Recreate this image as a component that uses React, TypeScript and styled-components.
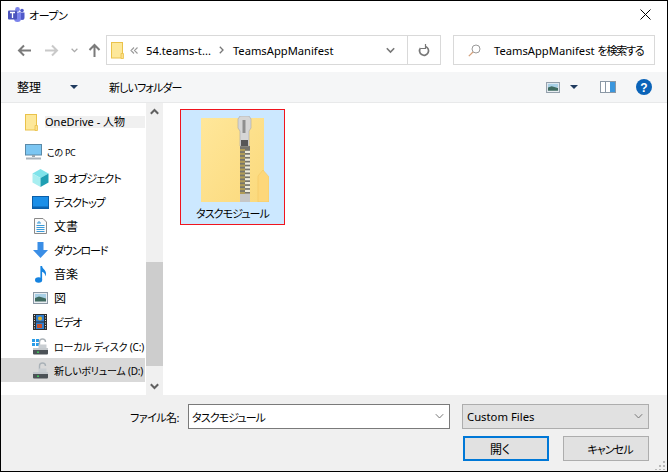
import React from "react";
import styled, { createGlobalStyle } from "styled-components";

const Global = createGlobalStyle`
  html, body { margin: 0; padding: 0; background: #000; }
  * { box-sizing: border-box; }
`;
const font = `"Noto Sans", "Noto Sans CJK JP", sans-serif`;

const Win = styled.div`
  width: 668px; height: 472px; background: #fff; border: 1px solid #000;
  display: flex; flex-direction: column;
  font-family: ${font}; font-size: 12px; color: #000; overflow: hidden; position: relative;
  font-feature-settings: "palt";
`;
const Kana = styled.span`font-size: 11px; letter-spacing: -0.9px; white-space: nowrap;`;
const TitleBar = styled.div`
  height: 27px; margin-bottom: 2px; display: flex; align-items: center; padding: 0 0 0 7px; gap: 4px; flex: none;
`;
const Title = styled.span`flex: 1; font-size: 11px; letter-spacing: -0.4px;`;
const CloseBtn = styled.div`width: 46px; height: 29px; display: flex; align-items: center; justify-content: center; margin-right: -1px;`;
const NavRow = styled.div`
  height: 30px; margin-top: 5px; display: flex; align-items: stretch; flex: none; padding-left: 11px;
`;
const NavBtns = styled.div`width: 94px; display: flex; align-items: center; flex: none;`;
const NavSlot = styled.div<{ $w: number }>`width: ${p => p.$w}px; display: flex; justify-content: center; align-items: center; flex: none;`;
const Address = styled.div`
  width: 335px; border: 1px solid #d9d9d9; display: flex; align-items: center; padding-left: 4px; flex: none;
`;
const Crumb = styled.span`font-size: 11.2px; white-space: nowrap;`;
const Sep = styled.span<{ $l: number; $r: number }>`display: flex; align-items: center; margin: 0 ${p => p.$r}px 0 ${p => p.$l}px;`;
const AddrSpacer = styled.div`flex: 1;`;
const AddrDrop = styled.div`width: 33px; display: flex; justify-content: center; flex: none;`;
const AddrRefresh = styled.div`width: 33px; height: 100%; border-left: 1px solid #d9d9d9; display: flex; align-items: center; justify-content: center; flex: none;`;
const Search = styled.div`
  width: 202px; margin-left: 12px; border: 1px solid #d9d9d9; display: flex; align-items: center; padding-left: 14px; gap: 13px; flex: none;
`;
const SearchIcon = styled.svg`flex: none;`;
const SearchText = styled.span`font-size: 11.2px; white-space: nowrap;`;
const SearchKana = styled.span`font-size: 11px; letter-spacing: -1.2px;`;
const Toolbar = styled.div`
  height: 31px; margin-top: 7px; background: #f5f6f7; border-bottom: 1px solid #e8e9ea; display: flex; align-items: center;
  flex: none; position: relative; padding-left: 16px;
`;
const ToolLabel = styled.span`font-size: 12px; white-space: nowrap;`;
const NewFolder = styled(Kana)`margin-left: 31px;`;
const ToolSpacer = styled.div`flex: 1;`;
const Caret = styled.span<{ $ml: number }>`
  width: 0; height: 0; border-left: 4px solid transparent; border-right: 4px solid transparent; border-top: 4px solid #1f3a5f;
  margin-left: ${p => p.$ml}px; flex: none;
`;
const PaneIcon = styled.svg`margin-left: 22px; flex: none;`;
const HelpIcon = styled.svg`margin-left: 20px; margin-right: 15px; flex: none;`;
const Main = styled.div`flex: 1; display: flex; min-height: 0;`;
const Sidebar = styled.div`width: 144px; flex: none; padding-top: 8px; display: flex; flex-direction: column;`;
const NavItem = styled.div<{ $sel?: boolean; $pl: number; $h?: number; $fs?: number; $mt?: number; $ls?: number }>`
  height: ${p => p.$h ?? 24}px; display: flex; align-items: center; padding-left: ${p => p.$pl}px; gap: 4px;
  margin-top: ${p => p.$mt ?? 0}px; letter-spacing: ${p => p.$ls ?? 0}px;
  background: ${p => (p.$sel ? "#d9d9d9" : "transparent")}; font-size: ${p => p.$fs ?? 12}px; white-space: nowrap; flex: none;
`;
const OneDriveRow = styled.div`height: 22px; display: flex; align-items: center; padding-left: 24px; gap: 7px; margin-bottom: 8px; flex: none;`;
const OneDriveLabel = styled.span`flex: 1; background: #f0f0f0; height: 12px; line-height: 12px; font-size: 11px; white-space: nowrap;`;
const IconBox = styled.span`width: 20px; display: flex; justify-content: center; align-items: center; flex: none;`;
const Scrollbar = styled.div`width: 17px; margin-left: 1px; background: #f0f0f0; flex: none; display: flex; flex-direction: column;`;
const ScrollBtn = styled.div`height: 17px; display: flex; align-items: center; justify-content: center; flex: none;`;
const ScrollSpace = styled.div`height: 142px; flex: none;`;
const Thumb = styled.div`height: 104px; background: #cdcdcd; flex: none;`;
const ScrollRest = styled.div`flex: 1;`;
const Content = styled.div`flex: 1; padding: 6px 0 0 17px;`;
const TileFrame = styled.div`width: 105px; height: 116px; background: #f0141e; padding: 1px;`;
const Tile = styled.div`
  width: 100%; height: 100%; background: #cce8ff; display: flex; flex-direction: column; align-items: center;
`;
const TileIcon = styled.div`height: 93px; padding-top: 6px; padding-left: 4px; flex: none;`;
const TileLabel = styled(Kana)`line-height: 16px; margin-top: 3px;`;
const Bottom = styled.div`height: 76px; background: #f0f0f0; flex: none; position: relative; padding: 9px 18px 0 129px; display: flex; flex-direction: column; gap: 7px;`;
const FieldRow = styled.div`display: flex; align-items: center; height: 25px;`;
const FieldLabel = styled(Kana)`width: 58px; flex: none; letter-spacing: -0.5px;`;
const Input = styled.div`
  width: 262px; height: 25px; background: #fff; border: 1px solid #7a7a7a; display: flex; align-items: center; padding-left: 3px; justify-content: space-between; padding-right: 5px; flex: none;
`;
const Combo = styled.div`
  width: 187px; height: 25px; margin-left: 12px; background: #e1e1e1; border: 1px solid #adadad; display: flex; align-items: center; justify-content: space-between; padding: 0 5px 0 4px; font-size: 11.3px; flex: none;
`;
const BtnRow = styled.div`display: flex; justify-content: flex-end; gap: 14px;`;
const Btn = styled.div<{ $primary?: boolean; $shift: number }>`
  width: 86px; height: 25px; background: #e1e1e1; border: ${p => (p.$primary ? "2px solid #0078d7" : "1px solid #adadad")};
  display: flex; align-items: center; justify-content: center; font-size: 12px; flex: none;
  padding-left: ${p => Math.max(p.$shift, 0)}px; padding-right: ${p => Math.max(-p.$shift, 0)}px;
`;
const Grip = styled.svg`position: absolute; right: 1px; bottom: 1px;`;

const Arrow = ({ dir, c }: { dir: "l" | "r" | "u"; c: string }) => {
  const d = dir === "l" ? "M2 7.5H14M7 2.5L2 7.5L7 12.5" : dir === "r" ? "M1 7.5H13M8 2.5L13 7.5L8 12.5" : "M7.5 14V2M2.5 7L7.5 2L12.5 7";
  return <svg width="15" height="15" fill="none" stroke={c} strokeWidth="2"><path d={d} /></svg>;
};
const Chev = ({ c = "#777", w = 9, up = false, sw = 1.6 }: { c?: string; w?: number; up?: boolean; sw?: number }) => (
  <svg width={w} height="7" viewBox="0 0 9 7" fill="none" stroke={c} strokeWidth={sw} transform={up ? "rotate(180)" : undefined}><path d="M0.8 1.2L4.5 5L8.2 1.2" /></svg>
);
const SmallFolder = () => (
  <svg width="13" height="17" viewBox="0 0 13 17"><rect x=".5" y=".5" width="11" height="15.5" fill="#fde89a" stroke="#eac24a" /><path d="M10 11.5h2.5v5H10z" fill="#fde08a" stroke="#eac24a" strokeWidth=".8" /></svg>
);
const Teams = () => (
  <svg width="17" height="15" viewBox="0 0 17 15">
    <circle cx="9.5" cy="2.5" r="2.4" fill="#7b83eb" /><circle cx="14" cy="3.5" r="1.8" fill="#5059c9" />
    <path d="M11 5.5h5.5v5a2.5 2.5 0 0 1-5 0z" fill="#5059c9" /><path d="M5 5.5h8v6a3.5 3.5 0 0 1-7 0z" fill="#7b83eb" />
    <rect x="0" y="3.5" width="9" height="9" rx="1" fill="#4b53bc" /><path d="M2 5.5h5M4.5 5.5v5.5" stroke="#fff" strokeWidth="1.3" />
  </svg>
);
const Picture = ({ w = 15, h = 12 }: { w?: number; h?: number }) => (
  <svg width={w} height={h} viewBox="0 0 15 12"><rect x=".5" y=".5" width="14" height="11" fill="#e8edf2" stroke="#8b98a5" /><rect x="2" y="2" width="11" height="4" fill="#a8d0e6" /><path d="M2 6l4-1.5 7 2v3H2z" fill="#3f6b60" /></svg>
);
const PC = () => (
  <svg width="17" height="16" viewBox="0 0 17 16"><rect x=".5" y=".5" width="16" height="10.5" fill="#7cc6f2" stroke="#5b8aa8" /><rect x="7" y="11" width="3" height="2" fill="#9aa5ad" /><rect x="1" y="13.5" width="15" height="2" fill="#a9b3bb" /></svg>
);
const Cube = () => (
  <svg width="17" height="18" viewBox="0 0 17 18"><path d="M8.5 0L16.5 4.5 8.5 9 .5 4.5z" fill="#7fe3ea" /><path d="M.5 4.5L8.5 9v9L.5 13.5z" fill="#a8eef0" /><path d="M16.5 4.5L8.5 9v9l8-4.5z" fill="#1f9fb3" /></svg>
);
const Desktop = () => (
  <svg width="17" height="13" viewBox="0 0 17 13"><rect x=".5" y=".5" width="16" height="12" fill="#1b8fe8" stroke="#0b5ea8" /><rect x="1" y="10.5" width="15" height="1.5" fill="#0b63b0" /></svg>
);
const Doc = () => (
  <svg width="13" height="16" viewBox="0 0 13 16"><path d="M.5.5h8.5l3.5 3.5v11.5H.5z" fill="#fafafa" stroke="#8a8a8a" /><path d="M3 5h4M5 3v2M2.5 7.5h8M2.5 9.5h8M2.5 11.5h8M2.5 13.5h8" stroke="#3a9ad9" /></svg>
);
const Down = () => (
  <svg width="15" height="16" viewBox="0 0 15 16"><path d="M4.5 0h6v8H15l-7.5 8L0 8h4.5z" fill="#3a8ee6" /></svg>
);
const Music = () => (
  <svg width="11" height="17" viewBox="0 0 11 17"><ellipse cx="3.6" cy="14" rx="3.6" ry="2.8" fill="#1583e0" /><path d="M5.4 0h1.7c.2 3 3.9 3.6 3.9 7.6 0 1-.3 1.8-.8 2.6.1-3-2-4.2-3.1-4.5V14H5.4z" fill="#1583e0" /></svg>
);
const Film = () => (
  <svg width="14" height="16" viewBox="0 0 14 16"><rect width="14" height="16" fill="#2e2e2e" /><rect x="3" y="1" width="8" height="6.5" fill="#2f7fd1" /><rect x="3" y="8.5" width="8" height="6.5" fill="#2f7fd1" /><circle cx="7" cy="4.5" r="2" fill="#e0b02a" /><rect x="4" y="10" width="5" height="4" fill="#c9522a" /><path d="M1 1.5h1M1 4h1M1 6.5h1M1 9h1M1 11.5h1M1 14h1M12 1.5h1M12 4h1M12 6.5h1M12 9h1M12 11.5h1M12 14h1" stroke="#ddd" /></svg>
);
const Drive = ({ win }: { win?: boolean }) => (
  <svg width="17" height="17" viewBox="0 0 17 17">
    {win && <path d="M0 1h3v3H0zM4 1h3v3H4zM0 5h3v3H0zM4 5h3v3H4z" fill="#2a9de8" />}
    <path d="M7.5 7V4a3 3 0 0 1 6 0" fill="none" stroke="#aab2b8" strokeWidth="1.4" /><rect x="6.5" y="6.5" width="8" height="4" fill="#c9ced2" />
    <rect x="1" y="11" width="15" height="5.5" rx="1" fill="#4c5257" /><rect x="1" y="10" width="15" height="2" fill="#c3c8cc" /><rect x="5" y="13.5" width="2" height="1.4" fill="#3fd15a" />
  </svg>
);
const ZipFolder = () => {
  const teeth = Array.from({ length: 12 }, (_, i) => i);
  return (
    <svg width="68" height="86" viewBox="0 0 68 86">
      <defs>
        <linearGradient id="f" x1="0" y1="0" x2="1" y2="1"><stop offset="0" stopColor="#ffe79a" /><stop offset="1" stopColor="#fbd97c" /></linearGradient>
      </defs>
      <rect x="0" y="2" width="63" height="84" fill="url(#f)" />
      <path d="M57 60 L62 54 L68 61 V86 H57 Z" fill="#fdd77a" stroke="#f3c863" strokeWidth=".6" />
      <rect x="39" y="30" width="10" height="50" fill="#77756c" />
      {teeth.map(i => (
        <g key={i}>
          <rect x={39} y={33 + i * 3.9} width={5} height={2.2} fill="#b09c58" />
          <rect x={44} y={34.8 + i * 3.9} width={5} height={2.2} fill="#efebd8" />
        </g>
      ))}
      <path d="M39 0h9l2 3v9l-2 3v15h-9V15l-2-3V3z" fill="#d6d6d6" stroke="#a8a8a8" strokeWidth=".6" />
      <rect x="41.5" y="4" width="3" height="13" fill="#8f8f8f" />
      <rect x="40" y="24" width="7" height="6" fill="#565656" />
      <rect x="39" y="78" width="10" height="8" fill="#c6c6c6" />
    </svg>
  );
};

export default function App() {
  return (
    <Win>
      <Global />
      <TitleBar>
        <Teams />
        <Title>オープン</Title>
        <CloseBtn>
          <svg width="11" height="11" stroke="#000"><path d="M.5.5l10 10M10.5.5l-10 10" /></svg>
        </CloseBtn>
      </TitleBar>
      <NavRow>
        <NavBtns>
          <NavSlot $w={24}><Arrow dir="l" c="#7a7a7a" /></NavSlot>
          <NavSlot $w={30}><Arrow dir="r" c="#c9c9c9" /></NavSlot>
          <NavSlot $w={16}><Chev c="#aaa" w={7} /></NavSlot>
          <NavSlot $w={24}><Arrow dir="u" c="#7a7a7a" /></NavSlot>
        </NavBtns>
        <Address>
          <SmallFolder />
          <Sep $l={6} $r={8}><svg width="8" height="7" fill="none" stroke="#999" strokeWidth="1.1"><path d="M4 .5L1 3.5l3 3M7.5.5l-3 3 3 3" /></svg></Sep>
          <Crumb>54.teams-t...</Crumb>
          <Sep $l={8} $r={9}><svg width="5" height="8" fill="none" stroke="#777" strokeWidth="1.3"><path d="M.8.8L4 4 .8 7.2" /></svg></Sep>
          <Crumb>TeamsAppManifest</Crumb>
          <AddrSpacer />
          <AddrDrop><Chev c="#777" /></AddrDrop>
          <AddrRefresh>
            <svg width="12" height="13" viewBox="0 0 12 13" fill="none" stroke="#777" strokeWidth="1.7"><path d="M7.5 2.5A4.5 4.5 0 1 1 2.5 4" /><path d="M7.5 0v4.5H3" strokeWidth="1.2" /></svg>
          </AddrRefresh>
        </Address>
        <Search>
          <SearchIcon width="13" height="13" fill="none" viewBox="0 0 13 13"><circle cx="8" cy="5" r="4" stroke="#9a9a9a" /><path d="M5 8L.8 12.2" stroke="#d4a07a" strokeWidth="1.2" /></SearchIcon>
          <SearchText>TeamsAppManifest <SearchKana>を検索する</SearchKana></SearchText>
        </Search>
      </NavRow>
      <Toolbar>
        <ToolLabel>整理</ToolLabel>
        <Caret $ml={29} />
        <NewFolder>新しいフォルダー</NewFolder>
        <ToolSpacer />
        <Picture w={14} h={11} />
        <Caret $ml={10} />
        <PaneIcon width="16" height="12"><rect x=".5" y=".5" width="15" height="11" fill="#fff" stroke="#8b98a5" /><rect x="10" y="1" width="5" height="10" fill="#3a96dd" /><path d="M5.5 1v10" stroke="#8b98a5" /></PaneIcon>
        <HelpIcon width="16" height="16"><circle cx="8" cy="8" r="8" fill="#0a63b8" /><text x="8" y="12.5" textAnchor="middle" fontSize="12" fontWeight="700" fill="#fff" fontFamily="Liberation Sans">?</text></HelpIcon>
      </Toolbar>
      <Main>
        <Sidebar>
          <OneDriveRow><SmallFolder /><OneDriveLabel>OneDrive - 人物</OneDriveLabel></OneDriveRow>
          <NavItem $pl={22} $h={22} $fs={9} $ls={-0.3}><IconBox><PC /></IconBox>この PC</NavItem>
          <NavItem $pl={29} $mt={3} $fs={11} $ls={-0.9}><IconBox><Cube /></IconBox>3D オブジェクト</NavItem>
          <NavItem $pl={29} $fs={11} $ls={-1.1}><IconBox><Desktop /></IconBox>デスクトップ</NavItem>
          <NavItem $pl={29}><IconBox><Doc /></IconBox>文書</NavItem>
          <NavItem $pl={29} $fs={11} $ls={-1.1}><IconBox><Down /></IconBox>ダウンロード</NavItem>
          <NavItem $pl={29}><IconBox><Music /></IconBox>音楽</NavItem>
          <NavItem $pl={29}><IconBox><Picture /></IconBox>図</NavItem>
          <NavItem $pl={29} $fs={11} $ls={-1.1}><IconBox><Film /></IconBox>ビデオ</NavItem>
          <NavItem $pl={29} $fs={10} $ls={-0.2}><IconBox><Drive win /></IconBox>ローカル ディスク (C:)</NavItem>
          <NavItem $pl={29} $sel $fs={10} $ls={-0.2}><IconBox><Drive /></IconBox>新しいボリューム (D:)</NavItem>
        </Sidebar>
        <Scrollbar>
          <ScrollBtn><Chev up c="#606060" sw={2} /></ScrollBtn>
          <ScrollSpace />
          <Thumb />
          <ScrollRest />
          <ScrollBtn><Chev c="#606060" sw={2} /></ScrollBtn>
        </Scrollbar>
        <Content>
          <TileFrame>
            <Tile>
              <TileIcon><ZipFolder /></TileIcon>
              <TileLabel>タスクモジュール</TileLabel>
            </Tile>
          </TileFrame>
        </Content>
      </Main>
      <Bottom>
        <FieldRow>
          <FieldLabel>ファイル名:</FieldLabel>
          <Input><Kana>タスクモジュール</Kana><Chev c="#777" sw={1} /></Input>
          <Combo>Custom Files<Chev c="#777" sw={1} /></Combo>
        </FieldRow>
        <BtnRow>
          <Btn $primary $shift={-12}>開く</Btn>
          <Btn $shift={8}><Kana>キャンセル</Kana></Btn>
        </BtnRow>
        <Grip width="11" height="11" fill="#b8b8b8"><path d="M8 2h2v2H8zM4 6h2v2H4zM8 6h2v2H8zM0 10h2v1H0zM4 10h2v1H4zM8 10h2v1H8z" /></Grip>
      </Bottom>
    </Win>
  );
}
